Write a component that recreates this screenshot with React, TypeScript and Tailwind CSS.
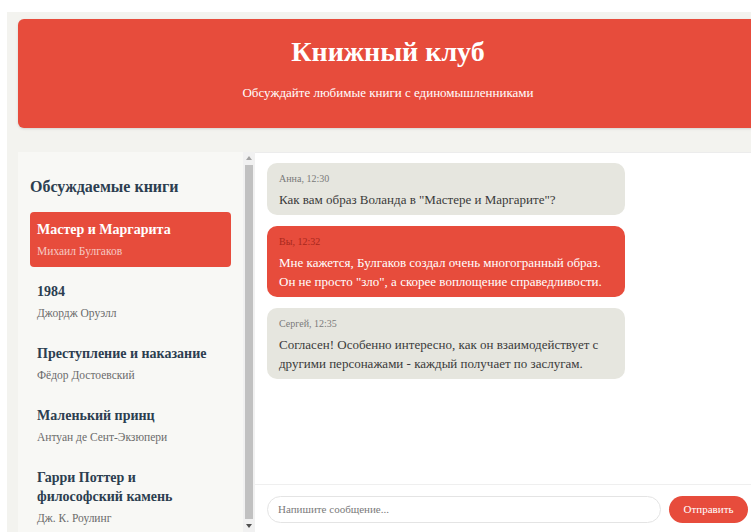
import React from "react";

type Book = { title: string; author: string };
type Message = { who: string; time: string; text: string; mine?: boolean };

const books: Book[] = [
  { title: "Мастер и Маргарита", author: "Михаил Булгаков" },
  { title: "1984", author: "Джордж Оруэлл" },
  { title: "Преступление и наказание", author: "Фёдор Достоевский" },
  { title: "Маленький принц", author: "Антуан де Сент-Экзюпери" },
  { title: "Гарри Поттер и философский камень", author: "Дж. К. Роулинг" },
];

const messages: Message[] = [
  { who: "Анна", time: "12:30", text: 'Как вам образ Воланда в "Мастере и Маргарите"?' },
  {
    who: "Вы",
    time: "12:32",
    text: 'Мне кажется, Булгаков создал очень многогранный образ. Он не просто "зло", а скорее воплощение справедливости.',
    mine: true,
  },
  {
    who: "Сергей",
    time: "12:35",
    text: "Согласен! Особенно интересно, как он взаимодействует с другими персонажами - каждый получает по заслугам.",
  },
];

const serif = "font-['Liberation_Serif','DejaVu_Serif',serif]";

function Sidebar() {
  return (
    <aside className="w-[237px] shrink-0 h-[380px] bg-[#f8f8f5] flex overflow-hidden">
      <div className="flex-1 px-3 pt-[25px]">
        <h2 className="text-[16px] font-bold text-[#2c3e50] leading-5 mb-[15px]">Обсуждаемые книги</h2>
        <ul className="flex flex-col gap-[7px]">
          {books.map((b, i) => (
            <li
              key={b.title}
              className={`rounded px-[7px] pt-[8px] pb-[8px] ${i === 0 ? "bg-[#e74c3c]" : ""}`}
            >
              <div
                className={`max-w-[180px] text-[14px] font-bold leading-[19px] ${
                  i === 0 ? "text-white" : "text-[#2c3e50]"
                }`}
              >
                {b.title}
              </div>
              <div
                className={`text-[11.5px] leading-[16px] mt-[4px] ${
                  i === 0 ? "text-[#f6c8c2]" : "text-[#6b6b6b]"
                }`}
              >
                {b.author}
              </div>
            </li>
          ))}
        </ul>
      </div>
      {/* scrollbar */}
      <div className="w-[12px] bg-[#f1f1f1] flex flex-col items-center">
        <div className="h-[12px] flex items-center justify-center">
          <div className="w-0 h-0 border-l-[3px] border-r-[3px] border-b-[4px] border-l-transparent border-r-transparent border-b-[#a3a3a3]" />
        </div>
        <div className="flex-1 w-[8px] bg-[#c1c1c1] my-[1px]" />
        <div className="h-[12px] flex items-center justify-center">
          <div className="w-0 h-0 border-l-[3px] border-r-[3px] border-t-[4px] border-l-transparent border-r-transparent border-t-[#505050]" />
        </div>
      </div>
    </aside>
  );
}

function Chat() {
  return (
    <section className="flex-1 h-[380px] bg-white border-t border-[#ececec] flex flex-col">
      <div className="flex-1 px-3 pt-[10px] flex flex-col gap-[11px]">
        {messages.map((m) => (
          <div
            key={m.time}
            className={`w-[358px] rounded-[10px] px-3 pt-[8px] pb-[6px] ${
              m.mine ? "bg-[#e74c3c]" : "bg-[#e6e6df]"
            }`}
          >
            <div
              className={`text-[10px] leading-[16px] ${
                m.mine ? "text-[#a8281c]" : "text-[#7a7a7a]"
              }`}
            >
              {m.who}, {m.time}
            </div>
            <p
              className={`text-[13px] leading-[19px] mt-[3px] ${
                m.mine ? "text-white" : "text-[#3a3a3a]"
              }`}
            >
              {m.text}
            </p>
          </div>
        ))}
      </div>
      <div className="border-t border-[#efefef] px-3 pt-[11px] pb-[9px] flex items-center gap-2">
        <div className="w-[394px] h-[27px] rounded-full border border-[#e4e4e4] px-[10px] flex items-center text-[11px] text-[#7a7a7a]">
          Напишите сообщение...
        </div>
        <button className="w-[79px] h-[27px] rounded-full bg-[#e74c3c] text-white text-[11px]">
          Отправить
        </button>
      </div>
    </section>
  );
}

export default function App() {
  return (
    <div className={`w-[751px] h-[532px] overflow-hidden bg-white ${serif}`}>
      <div className="ml-[7px] mt-[12px] w-[800px] h-[520px] bg-[#f3f3ef] pl-[11px] pt-[7px]">
        <header className="w-[740px] h-[109px] rounded-md bg-[#e74c3c] shadow-sm text-white text-center flex flex-col items-center pt-[16px]">
          <h1 className="text-[28px] font-bold leading-[34px]">Книжный клуб</h1>
          <p className="text-[13px] mt-[16px] leading-4">Обсуждайте любимые книги с единомышленниками</p>
        </header>
        <main className="mt-[24px] flex w-[740px]">
          <Sidebar />
          <Chat />
        </main>
      </div>
    </div>
  );
}
